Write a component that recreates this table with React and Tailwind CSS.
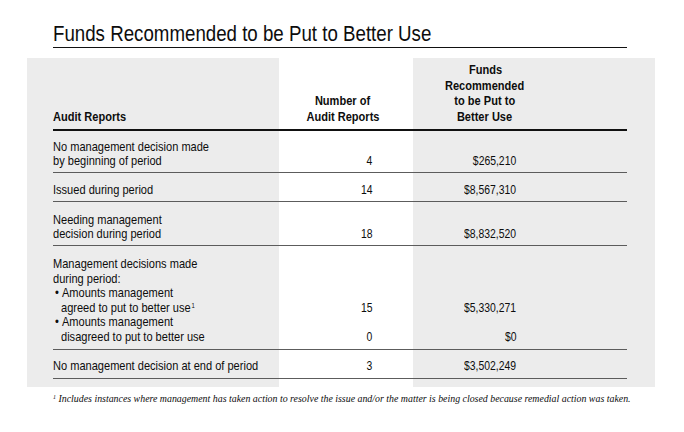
import React from "react";

const sans = { fontFamily: '"Liberation Sans", Arial, sans-serif' };

function L({ children, className = "" }) {
  return <span className={`inline-block whitespace-nowrap origin-left scale-x-[0.85] ${className}`}>{children}</span>;
}
function R({ children }) {
  return <span className="inline-block whitespace-nowrap origin-right scale-x-[0.8]">{children}</span>;
}
function C({ children }) {
  return <span className="inline-block whitespace-nowrap origin-center scale-x-[0.85]">{children}</span>;
}

const rows = [
  { label: ["No management decision made", "by beginning of period"], num: "4", amt: "$265,210", row: "row-start-2", pt: "pt-[8.5px] pb-[3px]" },
  { label: ["Issued during period"], num: "14", amt: "$8,567,310", row: "row-start-3", pt: "pt-[10.5px] pb-[3.5px]" },
  { label: ["Needing management", "decision during period"], num: "18", amt: "$8,832,520", row: "row-start-4", pt: "pt-[10.5px] pb-[3.5px]" },
];

const line = "border-b border-[#5c5c5c]";

export default function App() {
  return (
    <div className="w-[684px] h-[432px] bg-white text-[#0d0d0d] overflow-hidden" style={sans}>
      <div className="pt-[21px] pl-[53px] pr-[57px]">
        <h1 className="text-[22px] leading-[26px] font-normal border-b-[1.5px] border-[#111]">
          <L className="scale-x-[0.85]">Funds Recommended to be Put to Better Use</L>
        </h1>
      </div>
      <div className="mt-[10px] ml-[27px] grid grid-cols-[26px_226px_134px_214px_28px] text-[13px] leading-[14.6px]">
        <div className="col-start-1 col-end-3 row-start-1 row-end-8 bg-[#ececec]" />
        <div className="col-start-4 col-end-6 row-start-1 row-end-8 bg-[#ececec]" />

        {/* header */}
        <div className="col-start-2 row-start-1 flex items-end pb-[5px] font-bold leading-[15.5px] border-b-2 border-[#111]">
          <div><L>Audit Reports</L></div>
        </div>
        <div className="col-start-3 row-start-1 flex items-end justify-center pr-[7px] pb-[5px] font-bold leading-[15.5px] text-center border-b-2 border-[#111]">
          <div>
            <div><C>Number of</C></div>
            <div><C>Audit Reports</C></div>
          </div>
        </div>
        <div className="col-start-4 row-start-1 flex items-end pr-[70px] pt-[4px] pb-[5px] font-bold leading-[15.5px] text-center border-b-2 border-[#111]">
          <div className="w-full">
            <div><C>Funds</C></div>
            <div><C>Recommended</C></div>
            <div><C>to be Put to</C></div>
            <div><C>Better Use</C></div>
          </div>
        </div>

        {rows.map((r, i) => (
          <React.Fragment key={i}>
            <div className={`col-start-2 ${r.row} ${r.pt} ${line}`}>
              {r.label.map((l, j) => <div key={j}><L>{l}</L></div>)}
            </div>
            <div className={`col-start-3 ${r.row} flex items-end justify-end pr-[41px] ${r.pt} ${line}`}>
              <div><R>{r.num}</R></div>
            </div>
            <div className={`col-start-4 ${r.row} flex items-end justify-end pr-[111px] ${r.pt} ${line}`}>
              <div><R>{r.amt}</R></div>
            </div>
          </React.Fragment>
        ))}

        <div className={`col-start-2 row-start-5 pt-[10.5px] pb-[4px] ${line}`}>
          <div><L>Management decisions made</L></div>
          <div><L>during period:</L></div>
          <div className="pl-[2px]"><L>•&nbsp;Amounts management</L></div>
          <div className="pl-[8px]"><L>agreed to put to better use<sup className="text-[7px] ml-[1px]">1</sup></L></div>
          <div className="pl-[2px]"><L>•&nbsp;Amounts management</L></div>
          <div className="pl-[8px]"><L>disagreed to put to better use</L></div>
        </div>
        <div className={`col-start-3 row-start-5 flex flex-col items-end justify-end pr-[41px] pb-[4px] ${line}`}>
          <div><R>15</R></div>
          <div>&nbsp;</div>
          <div><R>0</R></div>
        </div>
        <div className={`col-start-4 row-start-5 flex flex-col items-end justify-end pr-[111px] pb-[4px] ${line}`}>
          <div><R>$5,330,271</R></div>
          <div>&nbsp;</div>
          <div><R>$0</R></div>
        </div>

        <div className={`col-start-2 row-start-6 pt-[9.5px] pb-[4px] ${line}`}>
          <div><L>No management decision at end of period</L></div>
        </div>
        <div className={`col-start-3 row-start-6 flex items-end justify-end pr-[41px] pb-[4px] ${line}`}>
          <div><R>3</R></div>
        </div>
        <div className={`col-start-4 row-start-6 flex items-end justify-end pr-[111px] pb-[4px] ${line}`}>
          <div><R>$3,502,249</R></div>
        </div>

        <div className="col-start-2 row-start-7 h-[8px]" />
      </div>
      <p
        className="mt-[6px] ml-[53px] text-[9.9px] italic leading-[12px] whitespace-nowrap"
        style={{ fontFamily: '"Liberation Serif", "Times New Roman", serif' }}
      >
        <sup className="text-[6px]">1</sup> Includes instances where management has taken action to resolve the issue and/or the matter is being closed because remedial action was taken.
      </p>
    </div>
  );
}
